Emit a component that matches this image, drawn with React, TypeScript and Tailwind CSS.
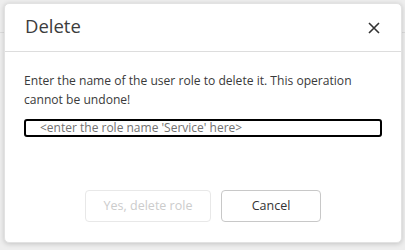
import React from "react";

export default function App() {
  const font = { fontFamily: '"Open Sans", "Noto Sans", sans-serif' };
  return (
    <div className="relative w-[405px] h-[250px] bg-[#eeeeee] overflow-hidden" style={font}>
      <div className="h-[33px] border-b border-[#dcdcdc]" />
      <div className="absolute left-[4px] top-[3px] w-[398px] h-[240px] bg-white rounded-[5px] shadow-[0_1px_5px_rgba(0,0,0,0.18)] border border-[#e2e2e2] flex flex-col">
        <div className="h-[48px] flex items-center justify-between pl-[20px] pr-[20px] border-b border-[#dddddd]">
          <span className="text-[18.5px] text-[#3c3c3c] leading-none mt-[-2px]">Delete</span>
          <svg width="12" height="12" viewBox="0 0 12 12" className="mr-[1px]">
            <path d="M1 1 L11 11 M11 1 L1 11" stroke="#333333" strokeWidth="1.6" fill="none" />
          </svg>
        </div>
        <div className="flex-1 flex flex-col px-[19px] pt-[19px]">
          <p className="text-[12.1px] leading-[19px] text-[#3a3a3a]">
            Enter the name of the user role to delete it. This operation cannot be undone!
          </p>
          <div className="mt-[10px] h-[18px] border-2 border-black rounded-[3px] flex items-center pl-[14px]">
            <span className="text-[12px] text-[#707070] leading-none">&lt;enter the role name 'Service' here&gt;</span>
          </div>
          <div className="mt-auto mb-[20px] flex justify-center gap-[10px]">
            <button className="w-[126px] h-[32px] rounded-[4px] border border-[#e8e8e8] text-[12.5px] text-[#cccccc] bg-white">
              Yes, delete role
            </button>
            <button className="w-[100px] h-[32px] rounded-[4px] border border-[#c8c8c8] text-[12.5px] text-[#333333] bg-white">
              Cancel
            </button>
          </div>
        </div>
      </div>
    </div>
  );
}
